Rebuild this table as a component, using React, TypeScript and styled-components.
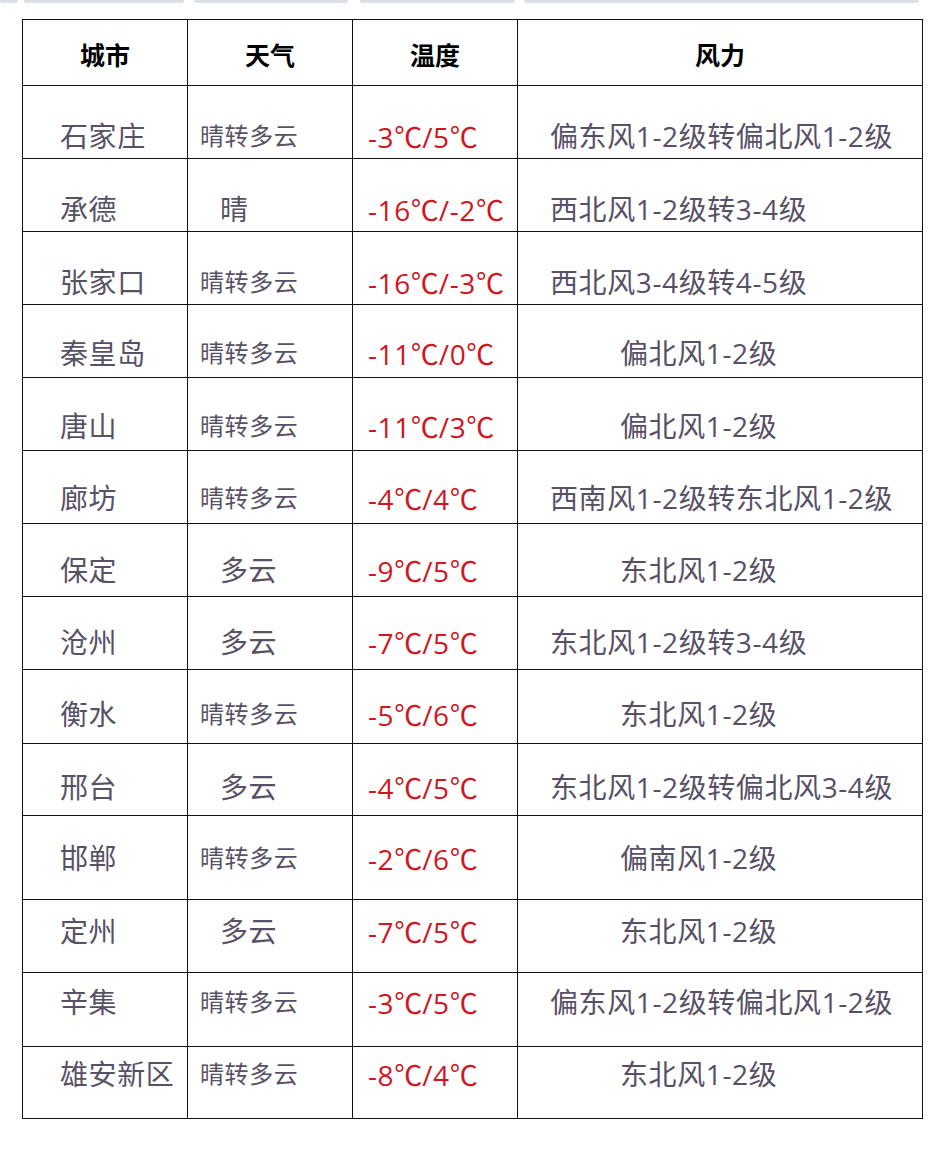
import React from 'react';
import styled, { createGlobalStyle } from 'styled-components';

const GlobalStyle = createGlobalStyle`
  html, body {
    margin: 0;
    padding: 0;
    background: #ffffff;
  }
  body {
    font-family: "Open Sans", "Noto Sans CJK SC", sans-serif;
  }
`;

const Page = styled.div`
  width: 942px;
  height: 1150px;
  overflow: hidden;
`;

const TopStrip = styled.div`
  display: flex;
  height: 3px;
`;

const StripPiece = styled.div<{ $left: number; $width: number }>`
  margin-left: ${(p) => p.$left}px;
  width: ${(p) => p.$width}px;
  height: 3px;
  background: #dde1e6;
  border-radius: 0 0 2px 2px;
`;

const TableWrap = styled.div`
  padding: 16px 0 0 22px;
`;

const Table = styled.div`
  display: inline-grid;
  grid-template-columns: 165px 165px 165px 405px;
  border-left: 1px solid #111;
  border-top: 1px solid #111;
`;

const Row = styled.div<{ $height: number }>`
  display: contents;
  & > div {
    height: ${(p) => p.$height}px;
  }
`;

const HeadCell = styled.div`
  box-sizing: border-box;
  border-right: 1px solid #111;
  border-bottom: 1px solid #111;
  display: flex;
  align-items: center;
  justify-content: center;
  padding-top: 2px;
  font-family: "Noto Sans CJK SC", sans-serif;
  font-weight: 600;
  font-size: 25px;
  color: #000;
`;

const Cell = styled.div<{ $top: number; $indent: number; $size?: number; $red?: boolean }>`
  box-sizing: border-box;
  border-right: 1px solid #111;
  border-bottom: 1px solid #111;
  padding-top: ${(p) => p.$top - 14}px;
  padding-left: ${(p) => p.$indent}px;
  font-size: ${(p) => p.$size ?? 28}px;
  letter-spacing: 0.6px;
  line-height: 28px;
  white-space: nowrap;
  color: ${(p) => (p.$red ? '#d0161e' : '#585166')};
`;

const Celsius = styled.span`
  font-family: "Noto Sans CJK SC", sans-serif;
  letter-spacing: 0;
`;

type Item = {
  city: string;
  weather: string;
  temp: string;
  wind: string;
};

const items: Item[] = [
  { city: '石家庄', weather: '晴转多云', temp: '-3℃/5℃', wind: '偏东风1-2级转偏北风1-2级' },
  { city: '承德', weather: '晴', temp: '-16℃/-2℃', wind: '西北风1-2级转3-4级' },
  { city: '张家口', weather: '晴转多云', temp: '-16℃/-3℃', wind: '西北风3-4级转4-5级' },
  { city: '秦皇岛', weather: '晴转多云', temp: '-11℃/0℃', wind: '偏北风1-2级' },
  { city: '唐山', weather: '晴转多云', temp: '-11℃/3℃', wind: '偏北风1-2级' },
  { city: '廊坊', weather: '晴转多云', temp: '-4℃/4℃', wind: '西南风1-2级转东北风1-2级' },
  { city: '保定', weather: '多云', temp: '-9℃/5℃', wind: '东北风1-2级' },
  { city: '沧州', weather: '多云', temp: '-7℃/5℃', wind: '东北风1-2级转3-4级' },
  { city: '衡水', weather: '晴转多云', temp: '-5℃/6℃', wind: '东北风1-2级' },
  { city: '邢台', weather: '多云', temp: '-4℃/5℃', wind: '东北风1-2级转偏北风3-4级' },
  { city: '邯郸', weather: '晴转多云', temp: '-2℃/6℃', wind: '偏南风1-2级' },
  { city: '定州', weather: '多云', temp: '-7℃/5℃', wind: '东北风1-2级' },
  { city: '辛集', weather: '晴转多云', temp: '-3℃/5℃', wind: '偏东风1-2级转偏北风1-2级' },
  { city: '雄安新区', weather: '晴转多云', temp: '-8℃/4℃', wind: '东北风1-2级' },
];

// row heights and the text centre measured from each row's top
const heights = [73, 73, 73, 73, 73, 73, 73, 73, 74, 72, 84, 73, 74, 72];
const centres = [50, 50, 50, 48, 48, 47, 46, 45, 44, 43, 42, 31, 29, 27];

const renderTemp = (temp: string) =>
  temp.split('℃').map((part, i, arr) => (
    <React.Fragment key={i}>
      {part}
      {i < arr.length - 1 && <Celsius>℃</Celsius>}
    </React.Fragment>
  ));

const App = () => {
  return (
    <Page>
      <GlobalStyle />
      <TopStrip>
        <StripPiece $left={0} $width={18} />
        <StripPiece $left={6} $width={160} />
        <StripPiece $left={10} $width={154} />
        <StripPiece $left={12} $width={155} />
        <StripPiece $left={9} $width={395} />
      </TopStrip>
      <TableWrap>
        <Table>
          <Row $height={66}>
            <HeadCell>城市</HeadCell>
            <HeadCell>天气</HeadCell>
            <HeadCell>温度</HeadCell>
            <HeadCell>风力</HeadCell>
          </Row>
          {items.map((it, i) => {
            const longWeather = it.weather.length > 2;
            const longWind = it.wind.length > 7;
            const top = centres[i];
            return (
              <Row key={it.city} $height={heights[i]}>
                <Cell $top={top} $indent={37}>{it.city}</Cell>
                <Cell
                  $top={top}
                  $indent={longWeather ? 12 : 32}
                  $size={longWeather ? 24 : 28}
                >
                  {it.weather}
                </Cell>
                <Cell $top={top} $indent={15} $red>{renderTemp(it.temp)}</Cell>
                <Cell $top={top} $indent={longWind ? 32 : 102}>{it.wind}</Cell>
              </Row>
            );
          })}
        </Table>
      </TableWrap>
    </Page>
  );
};

export default App;
